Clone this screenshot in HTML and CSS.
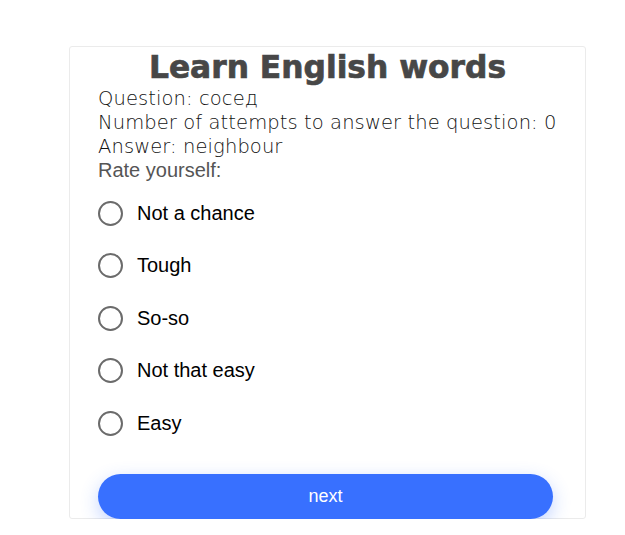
FILE: index.html
```html
<!DOCTYPE html>
<html>
<head>
<meta charset="utf-8">
<link rel="stylesheet" href="styles.css">
</head>
<body>
<div class="card">
  <h1 class="title">Learn English words</h1>
  <div class="info">
    <div class="line">Question: сосед</div>
    <div class="line">Number of attempts to answer the question: 0</div>
    <div class="line">Answer: neighbour</div>
  </div>
  <div class="rate">Rate yourself:</div>
  <div class="options">
    <label class="opt"><span class="radio"></span><span class="lbl">Not a chance</span></label>
    <label class="opt"><span class="radio"></span><span class="lbl">Tough</span></label>
    <label class="opt"><span class="radio"></span><span class="lbl">So-so</span></label>
    <label class="opt"><span class="radio"></span><span class="lbl">Not that easy</span></label>
    <label class="opt"><span class="radio"></span><span class="lbl">Easy</span></label>
  </div>
  <button class="next">next</button>
</div>
</body>
</html>
```
FILE: styles.css
```css
html, body { margin: 0; padding: 0; background: #fff; }
body { padding: 46px 0 0 69px; }
.card {
  width: 517px;
  height: 473px;
  box-sizing: border-box;
  border: 1px solid #ebebeb;
  border-radius: 3px;
  padding: 0 0 0 28px;
  position: relative;
}
.title {
  margin: 0;
  font-family: "DejaVu Sans", sans-serif;
  font-weight: 700;
  font-size: 31.3px;
  color: #474747;
  text-align: center;
  line-height: 38px;
  padding-top: 1px;
  margin-left: -28px;
  -webkit-text-stroke: 0.7px #474747;
}
.info {
  font-family: "DejaVu Sans", sans-serif;
  font-weight: 200;
  font-size: 19.5px;
  letter-spacing: 0.1px;
  line-height: 24px;
  color: #111;
  margin-top: 1px;
}
.rate {
  font-family: "Liberation Sans", Arial, sans-serif;
  font-size: 20px;
  line-height: 23px;
  color: #555;
}
.options { display: flex; flex-direction: column; gap: 26.5px; margin-top: 18px; }
.opt { display: flex; align-items: center; gap: 14px; height: 26px; }
.radio {
  width: 21px; height: 21px;
  border: 2px solid #6b6b6b;
  border-radius: 50%;
  flex: none;
}
.lbl {
  font-family: "Liberation Sans", Arial, sans-serif;
  font-size: 20px;
  color: #000;
}
.next {
  position: absolute;
  left: 28px;
  top: 427px;
  width: 455px;
  height: 45px;
  border: none;
  border-radius: 23px;
  background: #3870ff;
  color: #fff;
  font-family: "Liberation Sans", Arial, sans-serif;
  font-size: 18px;
  box-shadow: 0 6px 18px rgba(56, 112, 255, 0.3);
}
```
